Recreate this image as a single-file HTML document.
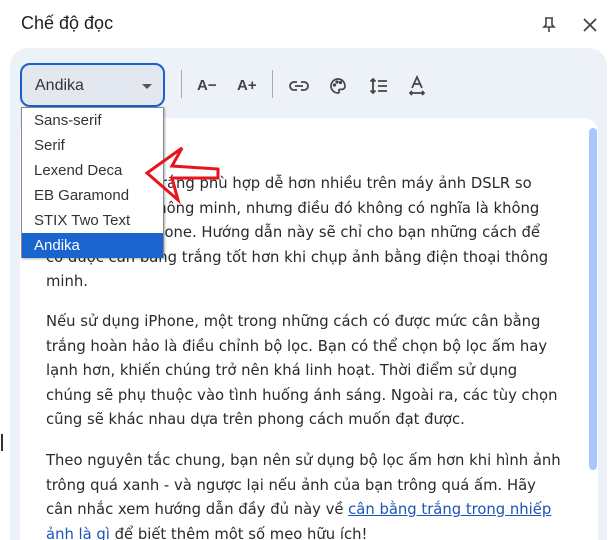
<!DOCTYPE html>
<html><head><meta charset="utf-8"><style>
*{margin:0;padding:0;box-sizing:border-box}
html,body{width:612px;height:540px;overflow:hidden}
body{background:#fff;font-family:"Liberation Sans","DejaVu Sans",sans-serif;position:relative;color:#1f1f1f}
.title{position:absolute;left:21px;top:13px;font-size:18px;color:#1f1f1f}
.panel{position:absolute;left:10px;top:48px;width:597px;height:492px;background:#edf1f8;border-radius:18px 18px 0 0}
.sel{position:absolute;left:20px;top:63px;width:145px;height:44px;border:2px solid #1a5fcc;border-radius:10px;background:#e3e8f0;font-size:16px;padding:12px 0 0 13px;color:#333}
.sel .car{position:absolute;right:11px;top:19px;width:0;height:0;border-left:5px solid transparent;border-right:5px solid transparent;border-top:5px solid #555}
.sep{position:absolute;top:70px;width:1px;height:28px;background:#aaa}
.tb{position:absolute;top:77px;font-size:15px;font-weight:bold;color:#444}
.card{position:absolute;left:20px;top:118px;width:578px;height:422px;background:#fff;border-radius:14px 14px 0 0}
.sb{position:absolute;left:589px;top:128px;width:8px;height:342px;background:#a8c7fa;border-radius:4px}
.txt{position:absolute;left:46px;line-height:24.5px;color:#2a2a2a;font-family:"DejaVu Sans","Liberation Sans",sans-serif;font-size:14.8px;white-space:nowrap}
.dd{position:absolute;left:21px;top:107px;width:143px;height:151px;background:#fff;border:1px solid #888;box-shadow:1px 1px 2px rgba(0,0,0,.3)}
.dd div{height:25px;font-size:15px;padding:4px 0 0 12px;color:#333}
.dd .on{background:#1a64d0;color:#fff}
a{color:#1a55b8}
</style></head><body>
<div class="title">Chế độ đọc</div>
<svg style="position:absolute;left:540px;top:16px" width="18" height="18" viewBox="0 0 18 18" fill="none" stroke="#444" stroke-width="1.6"><path d="M5 2h8M6 2v7l-2 2h10l-2-2V2M9 11v5"/></svg>
<svg style="position:absolute;left:582px;top:17px" width="16" height="16" viewBox="0 0 16 16" stroke="#444" stroke-width="1.8"><path d="M2 2l12 12M14 2L2 14"/></svg>
<div class="panel"></div>
<div class="sel">Andika<span class="car"></span></div>
<div class="sep" style="left:181px"></div>
<div class="sep" style="left:272px"></div>
<div class="tb" style="left:197px">A−</div>
<div class="tb" style="left:237px">A+</div>
<svg style="position:absolute;left:289px;top:78px" width="20" height="16" viewBox="0 0 20 16" fill="none" stroke="#444" stroke-width="1.8"><path d="M8 4H5a4 4 0 000 8h3M12 4h3a4 4 0 010 8h-3M6 8h8"/></svg>
<svg style="position:absolute;left:329px;top:77px" width="18" height="18" viewBox="0 0 18 18" fill="none" stroke="#444" stroke-width="1.7"><path d="M9 2a7 7 0 100 14c1 0 1.5-.8 1-1.6-.6-1 0-2 1-2h2a3 3 0 003-3C16 5 13 2 9 2z"/><circle cx="5.5" cy="8" r=".8" fill="#444"/><circle cx="8" cy="5" r=".8" fill="#444"/><circle cx="11.5" cy="5.5" r=".8" fill="#444"/></svg>
<svg style="position:absolute;left:369px;top:77px" width="20" height="18" viewBox="0 0 20 18" fill="none" stroke="#444" stroke-width="1.8"><path d="M4 2v14M1.5 4.5L4 2l2.5 2.5M1.5 13.5L4 16l2.5-2.5M9 4h9M9 9h9M9 14h9"/></svg>
<svg style="position:absolute;left:408px;top:75px" width="18" height="22" viewBox="0 0 18 22" fill="none" stroke="#444" stroke-width="1.7"><path d="M4 13L9 2l5 11M6 9h6M2 18h14M4 16l-2 2 2 2M14 16l2 2-2 2"/></svg>
<div class="card"></div>
<div class="sb"></div>
<div class="txt" style="top:172px">Việc cân bằng trắng phù hợp dễ hơn nhiều trên máy ảnh DSLR so<br>với điện thoại thông minh, nhưng điều đó không có nghĩa là không<br>thể làm trên iPhone. Hướng dẫn này sẽ chỉ cho bạn những cách để<br>có được cân bằng trắng tốt hơn khi chụp ảnh bằng điện thoại thông<br>minh.</div>
<div class="txt" style="top:310px">Nếu sử dụng iPhone, một trong những cách có được mức cân bằng<br>trắng hoàn hảo là điều chỉnh bộ lọc. Bạn có thể chọn bộ lọc ấm hay<br>lạnh hơn, khiến chúng trở nên khá linh hoạt. Thời điểm sử dụng<br>chúng sẽ phụ thuộc vào tình huống ánh sáng. Ngoài ra, các tùy chọn<br>cũng sẽ khác nhau dựa trên phong cách muốn đạt được.</div>
<div class="txt" style="top:449px">Theo nguyên tắc chung, bạn nên sử dụng bộ lọc ấm hơn khi hình ảnh<br>trông quá xanh - và ngược lại nếu ảnh của bạn trông quá ấm. Hãy<br>cân nhắc xem hướng dẫn đầy đủ này về <a href="#">cân bằng trắng trong nhiếp</a><br><a href="#">ảnh là gì</a> để biết thêm một số mẹo hữu ích!</div>
<div class="dd"><div>Sans-serif</div><div>Serif</div><div>Lexend Deca</div><div>EB Garamond</div><div>STIX Two Text</div><div class="on">Andika</div></div>
<svg style="position:absolute;left:140px;top:140px" width="90" height="66" viewBox="0 0 90 66" fill="none" stroke="#e8141b" stroke-width="3" stroke-linejoin="miter"><path d="M7 33L42 8 32 26 78 29 78 38 32 38 38 60Z"/></svg>
<div style="position:absolute;left:1px;top:434px;width:2px;height:17px;background:#333"></div>
</body></html>
